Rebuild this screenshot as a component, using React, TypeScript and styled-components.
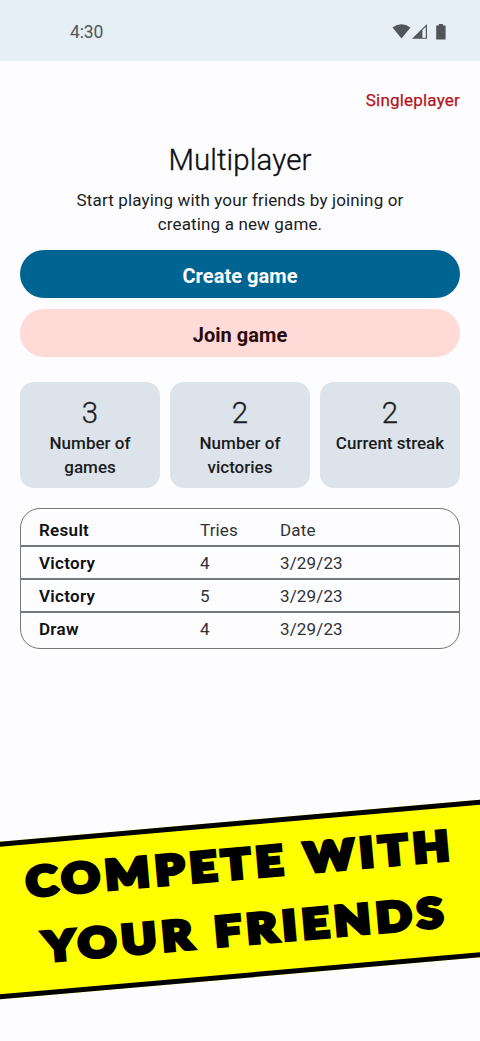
import React from "react";
import styled, { createGlobalStyle } from "styled-components";

const GlobalStyle = createGlobalStyle`
  *, *::before, *::after { box-sizing: border-box; }
  html, body { margin: 0; padding: 0; background: #fdfcff; }
  body { font-family: Roboto, "Liberation Sans", sans-serif; color: #1a1c1e; }
`;

const Screen = styled.div`
  display: flex;
  flex-direction: column;
  width: 480px;
  height: 1041px;
  overflow: hidden;
  background: #fdfcff;
`;

const StatusBar = styled.header`
  display: flex;
  justify-content: space-between;
  flex: none;
  height: 60.5px;
  padding: 21px 33px 0 70px;
  background: #e6eef6;
  color: #50565a;
`;

const Clock = styled.span`
  font-size: 17.5px;
  line-height: 22px;
  letter-spacing: -0.1px;
`;

const StatusIcons = styled.svg`
  display: block;
  width: 56px;
  height: 20px;
`;

const Content = styled.main`
  display: flex;
  flex-direction: column;
  flex: none;
  padding: 0 20px;
`;

const ModeLink = styled.a`
  align-self: flex-end;
  margin-top: 27px;
  font-size: 17px;
  font-weight: 400;
  line-height: 24px;
  letter-spacing: 0.2px;
  color: #b3151b;
  -webkit-text-stroke: 0.25px #b3151b;
`;

const Title = styled.h1`
  margin: 30px 0 0;
  font-size: 29.4px;
  font-weight: 300;
  line-height: 36px;
  letter-spacing: 0.15px;
  text-align: center;
  color: #0c0d0f;
  -webkit-text-stroke: 0.35px #0c0d0f;
`;

const Intro = styled.p`
  width: 345px;
  margin: 10.5px auto 0;
  font-size: 17px;
  font-weight: 400;
  line-height: 24.3px;
  letter-spacing: 0.14px;
  text-align: center;
`;

const Actions = styled.div`
  display: flex;
  flex-direction: column;
  gap: 11px;
  margin-top: 13px;
`;

const Button = styled.button<{ $primary?: boolean }>`
  height: 48px;
  padding: 4px 0 0;
  border: 0;
  border-radius: 24px;
  font: 700 20px/24px Roboto, "Liberation Sans", sans-serif;
  letter-spacing: 0.05px;
  background: ${(p) => (p.$primary ? "#006492" : "#ffdad7")};
  color: ${(p) => (p.$primary ? "#ffffff" : "#2a0b0b")};
`;

const Stats = styled.section`
  display: grid;
  grid-template-columns: repeat(3, 1fr);
  gap: 10px;
  margin-top: 25px;
`;

const StatCard = styled.div`
  height: 106px;
  padding: 13px 10px 0;
  border-radius: 14px;
  background: #dde3ea;
  text-align: center;
`;

const StatValue = styled.div`
  font-size: 29.4px;
  font-weight: 300;
  line-height: 36px;
  -webkit-text-stroke: 0.3px #1a1c1e;
`;

const StatLabel = styled.div`
  font-size: 17px;
  font-weight: 500;
  line-height: 24.3px;
  letter-spacing: 0;
`;

const Results = styled.div`
  margin-top: 20px;
  border: 1px solid #74777b;
  border-radius: 20px;
  overflow: hidden;
`;

const ResultRow = styled.div<{ $height: number }>`
  display: grid;
  grid-template-columns: 161px 80px 1fr;
  align-items: end;
  height: ${(p) => p.$height}px;
  padding: 0 18px 3px;
  font-size: 17px;
  line-height: 24px;
  letter-spacing: 0.14px;

  & + & {
    border-top: 2px solid #74777b;
  }

  &:last-child {
    padding-bottom: 7px;
  }
`;

const Outcome = styled.span`
  font-weight: 600;
  letter-spacing: 0.3px;
  color: #0f1012;
`;

const Detail = styled.span`
  font-weight: 400;
  color: #303234;
`;

const Banner = styled.div`
  flex: none;
  width: 540px;
  height: 156.5px;
  margin: 172px 0 0 -30px;
  padding: 4px 0 0 7px;
  border: solid #000;
  border-width: 5.5px 0;
  background: #ffff00;
  color: #000;
  text-align: center;
  transform: rotate(-5deg);
`;

const BannerLine = styled.div`
  font-family: Lato, "Liberation Sans", sans-serif;
  font-size: 40px;
  font-weight: 900;
  line-height: 66px;
  letter-spacing: 4.9px;
  white-space: nowrap;
  transform: scaleX(1.165);
  -webkit-text-stroke: 4.2px #000;
`;

const stats = [
  { value: 3, label: "Number of games" },
  { value: 2, label: "Number of victories" },
  { value: 2, label: "Current streak" },
];

const rows = [
  ["Result", "Tries", "Date"],
  ["Victory", "4", "3/29/23"],
  ["Victory", "5", "3/29/23"],
  ["Draw", "4", "3/29/23"],
];

const rowHeights = [36, 33, 33, 37];

export default function App() {
  return (
    <>
      <GlobalStyle />
      <Screen>
        <StatusBar>
          <Clock>4:30</Clock>
          <StatusIcons viewBox="0 0 56 20" fill="currentColor" aria-hidden="true">
            <path d="M1.5 6.5Q10.5 0.2 19.5 6.5L10.5 17.5Z" />
            <path fillRule="evenodd" d="M21 17.8L36 3V17.8ZM31.4 9L34.8 5.8V16.8H31.4Z" />
            <path d="M45.2 4.5H47.8V3H52V4.5H54.6V18.5H45.2Z" />
          </StatusIcons>
        </StatusBar>
        <Content>
          <ModeLink>Singleplayer</ModeLink>
          <Title>Multiplayer</Title>
          <Intro>Start playing with your friends by joining or creating a new game.</Intro>
          <Actions>
            <Button $primary>Create game</Button>
            <Button>Join game</Button>
          </Actions>
          <Stats>
            {stats.map((s) => (
              <StatCard key={s.label}>
                <StatValue>{s.value}</StatValue>
                <StatLabel>{s.label}</StatLabel>
              </StatCard>
            ))}
          </Stats>
          <Results>
            {rows.map(([outcome, tries, date], i) => (
              <ResultRow key={i} $height={rowHeights[i]}>
                <Outcome>{outcome}</Outcome>
                <Detail>{tries}</Detail>
                <Detail>{date}</Detail>
              </ResultRow>
            ))}
          </Results>
        </Content>
        <Banner>
          <BannerLine>COMPETE WITH</BannerLine>
          <BannerLine>YOUR FRIENDS</BannerLine>
        </Banner>
      </Screen>
    </>
  );
}
